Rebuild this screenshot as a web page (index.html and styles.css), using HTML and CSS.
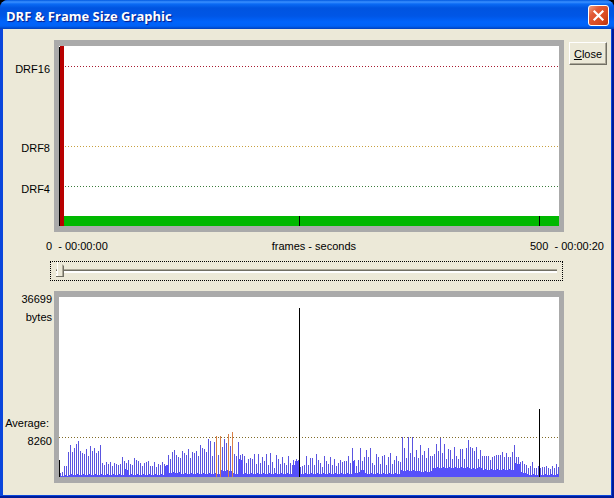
FILE: index.html
```html
<!DOCTYPE html>
<html lang="en">
<head>
    <meta charset="UTF-8">
    <meta name="viewport" content="width=device-width, initial-scale=1.0">
    <title>DRF &amp; Frame Size Graphic</title>
    <link rel="stylesheet" href="styles.css">
</head>
<body>
    <div class="window">
        <div class="title-bar">
            <h1>DRF &amp; Frame Size Graphic</h1>
            <button class="title-close" aria-label="Close window">
                <svg width="21" height="21" viewBox="0 0 21 21">
                    <path d="M6.5 6.5L14.5 14.5M14.5 6.5L6.5 14.5" stroke="#fff" stroke-width="2.2" stroke-linecap="square"/>
                </svg>
            </button>
        </div>

        <div class="content">
            <div class="row">
                <div class="labels drf-labels">
                    <span class="drf16">DRF16</span>
                    <span class="drf8">DRF8</span>
                    <span>DRF4</span>
                </div>
                <svg class="chart" viewBox="0 0 500 180" preserveAspectRatio="none" shape-rendering="crispEdges">
                    <path d="M0 20.5H500" stroke="#a81c30" stroke-dasharray="1 2"/>
                    <path d="M0 100.5H500" stroke="#c8a040" stroke-dasharray="1 2"/>
                    <path d="M0 140.5H500" stroke="#3c7c3c" stroke-dasharray="1 2"/>
                    <rect x="5" y="170" width="495" height="10" fill="#00b800"/>
                    <rect x="1" y="0" width="4" height="180" fill="#b80000"/>
                    <path d="M0.5 1V180M240.5 170V180M480.5 170V180" stroke="#000"/>
                </svg>
                <div class="side">
                    <button class="close-btn"><u>C</u>lose</button>
                </div>
            </div>

            <div class="axis">
                <span>0 &nbsp;- 00:00:00</span>
                <label class="axis-title" for="position">frames - seconds</label>
                <span>500 &nbsp;- 00:00:20</span>
            </div>

            <input type="range" class="slider" id="position" min="0" max="500" value="0">

            <div class="row">
                <div class="labels size-labels">
                    <span>36699</span>
                    <span>bytes</span>
                    <span class="average">Average:</span>
                    <span>8260</span>
                </div>
                <svg class="chart" viewBox="0 0 500 180" preserveAspectRatio="none" shape-rendering="crispEdges">
                    <path id="spikes" stroke="#5a55e0"/>
                    <path id="base" stroke="#5650fa"/>
                    <path id="peaks" stroke="#d88048"/>
                    <path d="M0 140.5H500" stroke="#806a28" stroke-dasharray="1 2"/>
                    <path d="M0.5 163V180M240.5 11V180M480.5 112V180" stroke="#000"/>
                </svg>
            </div>
        </div>
    </div>

    <script src="script.js"></script>
</body>
</html>
```
FILE: styles.css
```css
* {
    margin: 0;
    padding: 0;
    box-sizing: border-box;
}

body {
    background: #000;
    font-family: "Liberation Sans", Arial, sans-serif;
    font-size: 11px;
    color: #000;
}

.window {
    min-height: 100vh;
    display: flex;
    flex-direction: column;
    background: #0a46dc;
    border-radius: 8px 8px 0 0;
    box-shadow: inset -2px -2px #001c98;
    overflow: hidden;
}

.title-bar {
    display: flex;
    justify-content: space-between;
    align-items: center;
    height: 29px;
    padding: 2px 5px 0 6px;
    background: linear-gradient(to bottom, #0058e0 0, #3a90ff 2px, #0a6af4 4px, #0054e0 8px, #0056e6 16px, #0064fc 22px, #0062f6 26px, #0040bc 29px);
}

.title-bar h1 {
    font-family: "Open Sans", sans-serif;
    font-size: 13px;
    line-height: 18px;
    color: #fff;
    text-shadow: 1px 1px 1px #0a1883;
}

.title-close {
    width: 21px;
    height: 21px;
    border: 1px solid #fff;
    border-radius: 3px;
    background: linear-gradient(135deg, #f0a080 0, #e25a36 30%, #d84a20 70%, #b83008 100%);
}

.title-close svg {
    display: block;
    margin: -1px;
    fill: none;
}

.content {
    flex: 1;
    margin: 0 3px 3px;
    padding: 11px 0 12px;
    background: #ece9d8;
}

.row {
    display: grid;
    grid-template-columns: 51px 1fr 47px;
}

.chart {
    display: block;
    width: 100%;
    height: 192px;
    background: #fff;
    border: solid #aaa;
    border-width: 6px 5px;
}

.labels {
    display: flex;
    flex-direction: column;
    text-align: right;
    line-height: 16px;
}

.drf-labels {
    padding: 21px 4px 0 0;
}

.drf16 {
    margin-bottom: 63px;
}

.drf8 {
    margin-bottom: 25px;
}

.size-labels {
    gap: 2px;
    padding-right: 2px;
}

.average {
    margin-top: 88px;
    padding-right: 3px;
}

.side {
    padding: 2px 4px 0 5px;
}

.close-btn {
    width: 100%;
    height: 23px;
    font: inherit;
    background: #ece9d8;
    border: 1px solid;
    border-color: #fff #716f64 #716f64 #fff;
    box-shadow: inset -1px -1px #aca899;
}

.axis {
    display: flex;
    justify-content: space-between;
    padding: 6px 7px 7px 43px;
    line-height: 16px;
}

.axis-title {
    margin-right: 10px;
}

.slider {
    display: block;
    width: calc(100% - 95px);
    height: 20px;
    margin: 0 48px 10px 47px;
    padding: 0 5px;
    border: 1px dotted #000;
    background: transparent;
    appearance: none;
    outline: none;
}

.slider::-webkit-slider-runnable-track {
    height: 4px;
    border-top: 1px solid #aca899;
    border-bottom: 1px solid #fff;
    background: linear-gradient(to bottom, #716f64 1px, #fff 1px);
}

.slider::-webkit-slider-thumb {
    appearance: none;
    width: 8px;
    height: 15px;
    margin-top: -8px;
    background: linear-gradient(to right, #fff 2px, #ece9d8 2px, #ece9d8 6px, #aca899 6px, #aca899 7px, #716f64 7px);
    border-bottom: 1px solid #716f64;
    clip-path: polygon(1px 0, 4px 0, 8px 4px, 8px 15px, 0 15px, 0 12px, 1px 12px);
}
```
FILE: script.js
```javascript
// Height of every second frame, in chart units
const sizes = [
    4, 5, 11, 11, 25, 32, 25, 29, 33, 36, 26, 24, 23, 28, 21, 31, 26, 29, 24, 26,
    32, 14, 12, 15, 13, 15, 11, 14, 13, 12, 13, 20, 16, 14, 17, 13, 12, 19, 17, 16,
    14, 11, 14, 15, 16, 11, 11, 15, 10, 13, 12, 15, 13, 12, 22, 18, 25, 27, 22, 20,
    19, 26, 24, 22, 28, 19, 25, 24, 26, 21, 32, 29, 28, 25, 38, 36, 21, 35, 41, 22,
    41, 30, 38, 34, 43, 31, 45, 23, 21, 35, 22, 23, 21, 14, 18, 19, 18, 23, 13, 23,
    14, 20, 16, 23, 12, 24, 15, 9, 22, 18, 13, 20, 14, 12, 21, 14, 12, 12, 18, 17,
    10, 11, 12, 21, 12, 19, 19, 12, 23, 17, 14, 10, 21, 16, 13, 20, 12, 18, 11, 14,
    17, 15, 16, 16, 21, 14, 29, 17, 11, 17, 29, 16, 20, 27, 20, 29, 14, 12, 23, 20,
    13, 21, 22, 12, 20, 24, 13, 17, 21, 16, 15, 40, 29, 19, 40, 24, 40, 20, 27, 19,
    32, 22, 26, 19, 29, 21, 21, 23, 33, 26, 39, 24, 33, 18, 28, 27, 18, 30, 21, 18,
    28, 28, 18, 29, 37, 30, 29, 26, 30, 18, 27, 21, 21, 21, 21, 17, 20, 21, 22, 22,
    22, 25, 20, 24, 20, 20, 25, 32, 20, 20, 15, 16, 13, 12, 9, 11, 15, 9, 9, 11,
    9, 10, 10, 11, 9, 8, 11, 9, 13, 10
];

// The frames in between: [first index, height]
const baseRuns = [
    [0, 1], [5, 2], [33, 7], [35, 2], [53, 11], [55, 4], [61, 3], [81, 6],
    [87, 3], [90, 17], [92, 3], [117, 16], [120, 3], [147, 15], [148, 4],
    [151, 7], [153, 3], [171, 6], [180, 5], [187, 9], [206, 8], [209, 9], [212, 7],
    [228, 13], [231, 4], [234, 2]
];

let spikes = "", base = "", peaks = "", run = 0;

sizes.forEach(function(size, i) {
    if (run + 1 < baseRuns.length && baseRuns[run + 1][0] <= i) run++;
    const low = baseRuns[run][1] + (i % 3 === 0 ? 1 : 0);
    const x = i * 2 + 1.5;
    const line = "M" + x + " 180V" + (180 - size);
    // Frames well above the average are drawn in orange
    if (size > 40) {
        peaks += line;
    } else {
        spikes += line;
    }
    base += "M" + (x - 1) + " 180V" + (180 - low);
    if (size <= 40) base += "M" + x + " 180V" + (180 - Math.min(low, size));
});

document.getElementById("spikes").setAttribute("d", spikes);
document.getElementById("base").setAttribute("d", base);
document.getElementById("peaks").setAttribute("d", peaks);
```
